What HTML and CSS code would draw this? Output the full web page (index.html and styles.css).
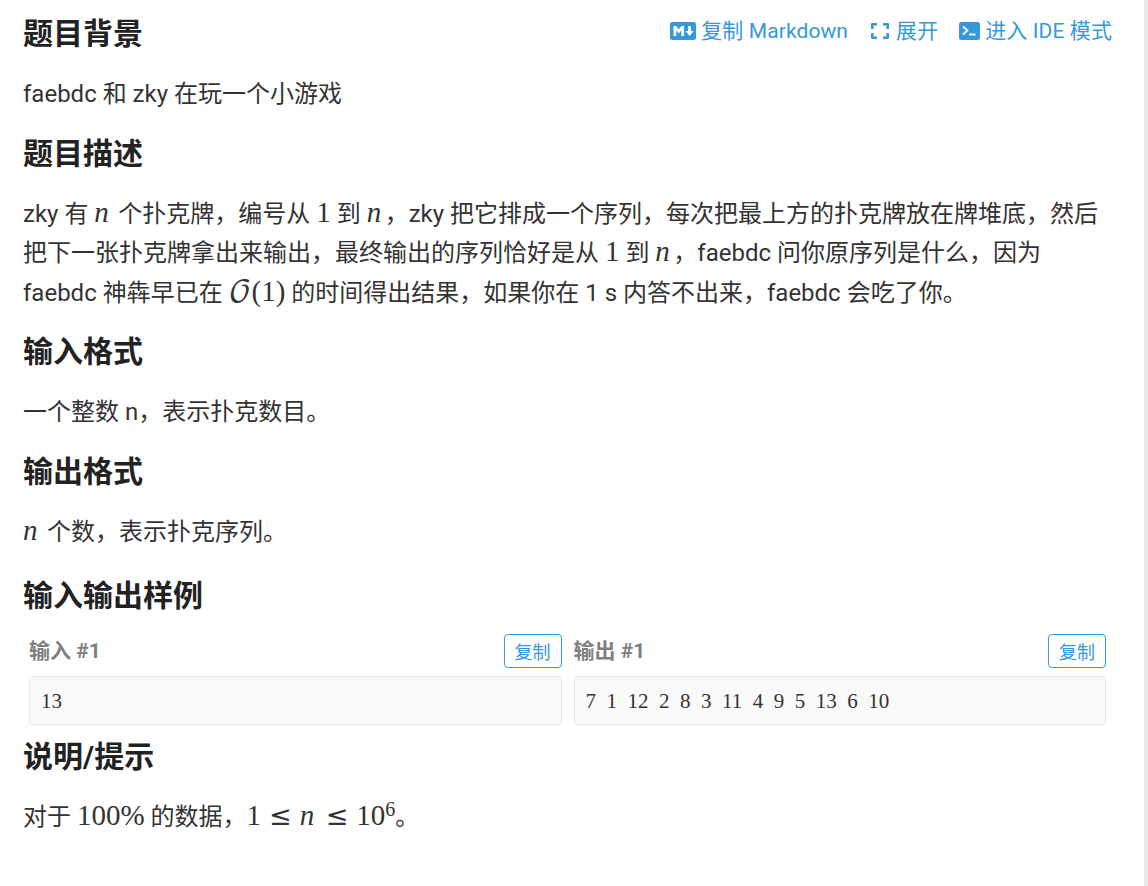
FILE: index.html
```html
<!DOCTYPE html>
<html lang="zh-CN">
<head>
<meta charset="utf-8">
<title>题目</title>
<link rel="stylesheet" href="styles.css">
</head>
<body>
<div class="scrollbar"></div>
<main class="page">
  <header class="top">
    <h2>题目背景</h2>
    <nav class="actions">
      <a class="action"><svg class="icon md" viewBox="0 0 26 18"><rect width="26" height="18" rx="2.5" fill="#3498db"/><path d="M3.5 14V4h2.7l2.6 3.6L11.4 4h2.7v10h-2.8V8.2L8.8 11.6 6.3 8.2V14z" fill="#fff"/><path d="M18.2 4h2.8v5h2.6l-4 5-4-5h2.6z" fill="#fff"/></svg>复制 Markdown</a>
      <a class="action"><svg class="icon ex" viewBox="0 0 20 18"><path d="M1 7V2.2C1 1.5 1.5 1 2.2 1H7v2.6H3.6V7zM13 1h4.8c.7 0 1.2.5 1.2 1.2V7h-2.6V3.6H13zM1 11h2.6v3.4H7V17H2.2C1.5 17 1 16.5 1 15.8zM16.4 11H19v4.8c0 .7-.5 1.2-1.2 1.2H13v-2.6h3.4z" fill="#3498db"/></svg>展开</a>
      <a class="action"><svg class="icon tm" viewBox="0 0 21 18"><rect width="21" height="18" rx="2.5" fill="#3498db"/><path d="M4 4.5l4.5 4-4.5 4" fill="none" stroke="#fff" stroke-width="1.8"/><path d="M10 12.5h6.5" stroke="#fff" stroke-width="1.8"/></svg>进入 IDE 模式</a>
    </nav>
  </header>
  <p>faebdc 和 zky 在玩一个小游戏</p>

  <h2>题目描述</h2>
  <p>zky 有 <span class="m"><i>n</i></span> 个扑克牌，编号从 <span class="m">1</span> 到 <span class="m"><i>n</i></span>，zky 把它排成一个序列，每次把最上方的扑克牌放在牌堆底，然后把下一张扑克牌拿出来输出，最终输出的序列恰好是从 <span class="m">1</span> 到 <span class="m"><i>n</i></span>，faebdc 问你原序列是什么，因为 faebdc 神犇早已在 <span class="m"><span class="cal">𝒪</span>(1)</span> 的时间得出结果，如果你在 1 s 内答不出来，faebdc 会吃了你。</p>

  <h2>输入格式</h2>
  <p>一个整数 n，表示扑克数目。</p>

  <h2>输出格式</h2>
  <p><span class="m"><i>n</i></span> 个数，表示扑克序列。</p>

  <h2 class="samples-title">输入输出样例</h2>
  <section class="samples">
    <div class="sample">
      <div class="sample-head"><h3>输入 #1</h3><button class="copy">复制</button></div>
      <pre class="code">13</pre>
    </div>
    <div class="sample">
      <div class="sample-head"><h3>输出 #1</h3><button class="copy">复制</button></div>
      <pre class="code">7 1 12 2 8 3 11 4 9 5 13 6 10</pre>
    </div>
  </section>

  <h2 class="hint-title">说明/提示</h2>
  <p>对于 <span class="m">100%</span> 的数据，<span class="m">1<span class="rel">≤</span><i>n</i><span class="rel">≤</span>10<sup>6</sup></span>。</p>
</main>
</body>
</html>
```
FILE: styles.css
```css
html, body {
  margin: 0;
  height: 886px;
  overflow: hidden;
  background: #fff;
}
body {
  font-family: Roboto, "Noto Sans CJK SC", sans-serif;
  font-size: 24px;
  color: #333;
}
.scrollbar {
  position: absolute;
  top: 0;
  right: 0;
  bottom: 0;
  width: 4px;
  background: #e8e8e8;
}
.page {
  width: 1089px;
  padding: 11px 0 0 23px;
}
h2 {
  margin: 16px 0 0;
  font-size: 30px;
  line-height: 45px;
  font-weight: 700;
  color: #222;
}
p {
  margin: 19px 0 0;
  line-height: 39.6px;
}
.top {
  display: flex;
  justify-content: space-between;
  align-items: flex-start;
}
.top h2 { margin: 0; }
.actions {
  display: flex;
  gap: 21px;
  padding-top: 2px;
}
.action {
  display: flex;
  align-items: center;
  gap: 5px;
  color: #3498db;
  font-size: 21px;
  line-height: 36px;
  letter-spacing: 0.1px;
}
.icon { height: 18px; flex: none; }
.md { width: 26px; }
.ex { width: 22px; }
.tm { width: 21px; }
.m {
  font-family: "Liberation Serif", serif;
  font-size: 29px;
  line-height: 1;
}
.m i { letter-spacing: 3.5px; }
.cal { font-family: "DejaVu Math TeX Gyre", "DejaVu Serif", serif; font-size: 29px; }
.rel { margin: 0 8px; font-family: "DejaVu Sans", sans-serif; font-size: 27px; }
sup { font-size: 20px; line-height: 0; vertical-align: 9px; }
.samples-title { margin-top: 20px; }
.samples {
  display: flex;
  gap: 12px;
  margin-top: 16px;
  padding: 0 6px;
}
.sample { flex: 1; min-width: 0; }
.sample-head {
  display: flex;
  justify-content: space-between;
  align-items: center;
  height: 34px;
}
.sample-head h3 {
  margin: 0;
  padding-bottom: 4px;
  font-size: 21px;
  font-weight: 700;
  color: #7f7f7f;
}
.copy {
  width: 58px;
  height: 34px;
  padding: 0;
  border: 1px solid #3498db;
  border-radius: 4px;
  background: #fff;
  color: #3498db;
  font-family: inherit;
  font-size: 18px;
}
.code {
  margin: 8px 0 0;
  height: 47px;
  padding: 0 11px;
  border: 1px solid #e8e8e8;
  border-radius: 3px;
  background: #fafafa;
  font-family: "Liberation Serif", serif;
  font-size: 21px;
  line-height: 49px;
  word-spacing: 5.25px;
  color: #333;
}
.hint-title { margin-top: 9px; }
```
